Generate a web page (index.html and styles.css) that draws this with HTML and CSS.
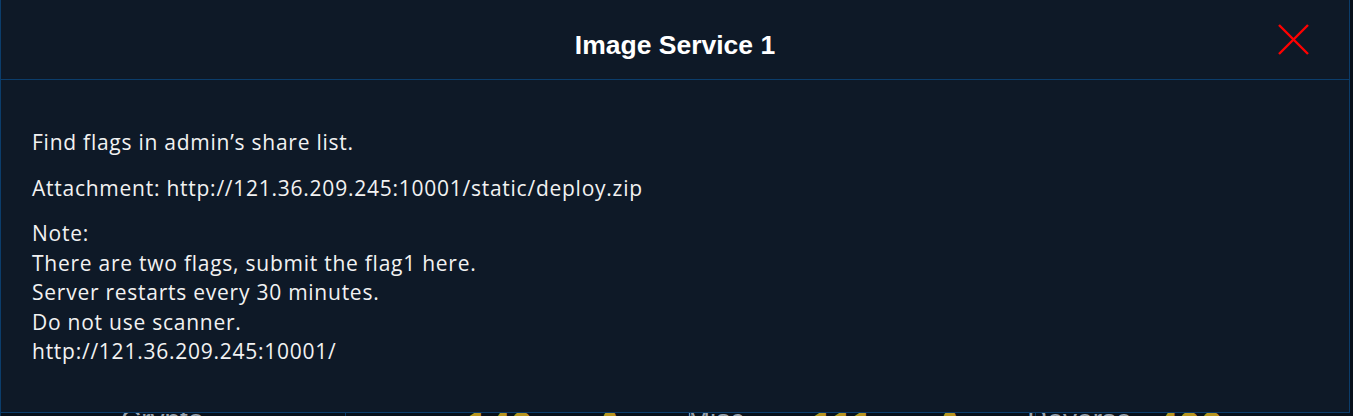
FILE: index.html
```html
<!DOCTYPE html>
<html>
<head>
<meta charset="utf-8">
<link rel="stylesheet" href="styles.css">
</head>
<body>
<div class="page">
  <div class="page-row">
    <div class="card"><span class="card-label">Crypto</span></div>
    <div class="card"><span class="card-num">140</span><span class="card-icon">✿</span><span class="card-label">Misc</span></div>
    <div class="card"><span class="card-num">111</span><span class="card-icon">✿</span><span class="card-label">Reverse</span></div>
    <div class="card"><span class="card-num">400</span></div>
  </div>
</div>
<div class="modal">
  <div class="modal-header">
    <h1 class="modal-title">Image Service 1</h1>
    <button class="modal-close" aria-label="close">
      <svg width="31" height="31" viewBox="0 0 31 31"><path d="M1 1L30 30M30 1L1 30" stroke="#ff0000" stroke-width="2.4" fill="none"/></svg>
    </button>
  </div>
  <div class="modal-body">
    <p>Find flags in admin’s share list.</p>
    <p>Attachment: http://121.36.209.245:10001/static/deploy.zip</p>
    <p>Note:<br>There are two flags, submit the flag1 here.<br>Server restarts every 30 minutes.<br>Do not use scanner.<br>http://121.36.209.245:10001/</p>
  </div>
</div>
</body>
</html>
```
FILE: styles.css
```css
html, body {
  margin: 0;
  padding: 0;
  height: 100%;
  overflow: hidden;
}
body {
  background: #07101a;
  font-family: "Open Sans", "Noto Sans", sans-serif;
  position: relative;
}
.page {
  padding-top: 406px;
}
.page-row {
  display: grid;
  grid-template-columns: 345px 345px 345px 318px;
}
.card {
  height: 60px;
  border-left: 1px solid #0b3a63;
  display: flex;
  gap: 60px;
  padding-left: 120px;
  color: #b8951f;
  font: bold 40px/1 "Liberation Sans", sans-serif;
}
.card-label {
  color: #9aa3ad;
  font-size: 28px;
  font-weight: normal;
}
.modal {
  position: absolute;
  top: -1px;
  left: 0;
  width: 1348px;
  height: 412px;
  background: #0e1927;
  border: 1px solid #0b3d6b;
  display: flex;
  flex-direction: column;
}
.modal-header {
  height: 80px;
  box-sizing: border-box;
  padding-top: 12px;
  border-bottom: 1px solid #0b3d6b;
  display: flex;
  align-items: center;
  justify-content: center;
  position: relative;
}
.modal-title {
  margin: 0;
  color: #ffffff;
  font: bold 26.5px "Liberation Sans", Arial, sans-serif;
}
.modal-close {
  position: absolute;
  right: 40px;
  top: 24px;
  width: 31px;
  height: 31px;
  padding: 0;
  border: 0;
  background: none;
  line-height: 0;
}
.modal-body {
  padding: 48px 31px 0;
  color: #f2f2f2;
  font-size: 21px;
  letter-spacing: 0.75px;
  line-height: 29.5px;
}
.modal-body p {
  margin: 0 0 16px;
}
```
